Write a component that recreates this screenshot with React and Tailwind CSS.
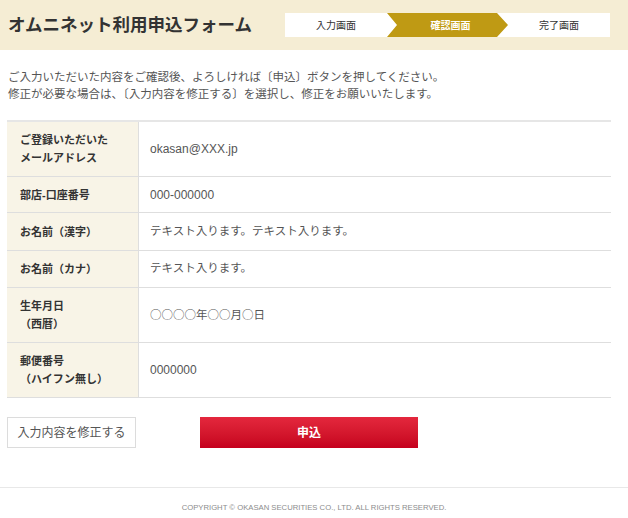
const rows = [
  { label: ["ご登録いただいた", "メールアドレス"], value: "okasan@XXX.jp", h: "h-[55px]", size: "text-[12px]" },
  { label: ["部店-口座番号"], value: "000-000000", h: "h-[36px]", size: "text-[12px]" },
  { label: ["お名前（漢字）"], value: "テキスト入ります。テキスト入ります。", h: "h-[38px]", size: "text-[11.5px]" },
  { label: ["お名前（カナ）"], value: "テキスト入ります。", h: "h-[37px]", size: "text-[11.5px]" },
  { label: ["生年月日", "（西暦）"], value: "○○○○年○○月○日", h: "h-[55px]", size: "text-[11.5px] font-['Noto_Sans_CJK_JP',sans-serif]" },
  { label: ["郵便番号", "（ハイフン無し）"], value: "0000000", h: "h-[55px]", size: "text-[12px]" },
];

const StepBar = () => (
  <div className="flex h-[24px] w-[325px] bg-white text-[10px] text-[#333]">
    <div className="flex w-[102px] items-center justify-center">入力画面</div>
    <div className="flex w-[121px] items-center justify-center bg-[#bf9a14] pl-[6px] font-bold text-white [clip-path:polygon(0_0,110px_0,100%_50%,110px_100%,0_100%,10px_50%)]">
      確認画面
    </div>
    <div className="flex flex-1 items-center justify-center">完了画面</div>
  </div>
);

export default function App() {
  return (
    <div className="min-h-[518px] bg-white font-['Liberation_Sans','Noto_Sans_CJK_JP',sans-serif]">
      {/* Header */}
      <div className="flex h-[50px] items-center justify-between bg-[#f5edd4] pl-[8px] pr-[18px]">
        <h1 className="text-[17.5px] font-bold text-[#333]">オムニネット利用申込フォーム</h1>
        <StepBar />
      </div>

      <div className="pl-[7px] pr-[17px]">
        <p className="mt-[18px] pl-[1px] font-['Noto_Sans_CJK_JP',sans-serif] text-[11.5px] leading-[17px] text-[#555]">
          ご入力いただいた内容をご確認後、よろしければ〔申込〕ボタンを押してください。
          <br />
          修正が必要な場合は、〔入力内容を修正する〕を選択し、修正をお願いいたします。
        </p>

        {/* Table */}
        <div className="mt-[18px] border-t-2 border-[#e6e6e6]">
          {rows.map((r, i) => (
            <div key={i} className={`grid grid-cols-[132px_1fr] border-b border-[#dedede] ${r.h}`}>
              <div className="flex flex-col justify-center border-r border-[#dedede] bg-[#f8f4e7] pl-[13px] text-[11px] font-bold leading-[18px] text-[#333]">
                {r.label.map((l) => (
                  <span key={l}>{l}</span>
                ))}
              </div>
              <div className={`flex items-center pl-[11px] text-[#555] ${r.size}`}>{r.value}</div>
            </div>
          ))}
        </div>

        {/* Buttons */}
        <div className="mt-[19px] flex items-center gap-[64px]">
          <button className="h-[31px] w-[129px] border border-[#dcdcdc] bg-white text-[12px] text-[#555]">
            入力内容を修正する
          </button>
          <button className="h-[31px] w-[218px] bg-gradient-to-b from-[#e4273d] to-[#c5001d] text-[12px] font-bold text-white">
            申込
          </button>
        </div>
      </div>

      {/* Footer */}
      <div className="mt-[39px] border-t border-[#e8e8e8] pt-[14px] text-center text-[7.7px] text-[#8c8c8c]">
        COPYRIGHT © OKASAN SECURITIES CO., LTD. ALL RIGHTS RESERVED.
      </div>
    </div>
  );
}
